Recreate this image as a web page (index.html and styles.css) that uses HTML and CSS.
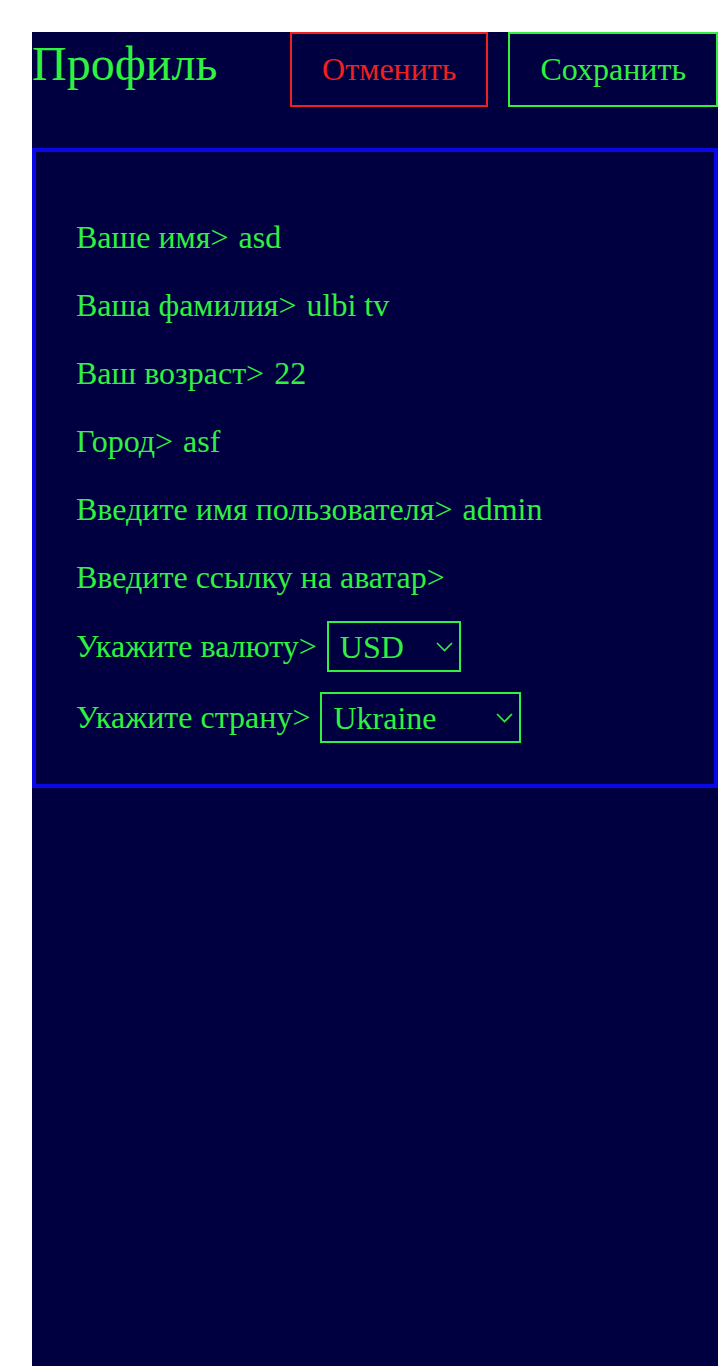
FILE: index.html
```html
<!DOCTYPE html>
<html lang="ru">
<head>
<meta charset="utf-8">
<title>Профиль</title>
<link rel="stylesheet" href="styles.css">
</head>
<body>
<div class="page">
  <div class="header">
    <h1 class="title">Профиль</h1>
    <div class="actions">
      <button class="btn btn-cancel">Отменить</button>
      <button class="btn btn-save">Сохранить</button>
    </div>
  </div>
  <div class="card">
    <div class="row"><span class="label">Ваше имя&gt;</span><input class="value" value="asd" readonly></div>
    <div class="row"><span class="label">Ваша фамилия&gt;</span><input class="value" value="ulbi tv" readonly></div>
    <div class="row"><span class="label">Ваш возраст&gt;</span><input class="value" value="22" readonly></div>
    <div class="row"><span class="label">Город&gt;</span><input class="value" value="asf" readonly></div>
    <div class="row"><span class="label">Введите имя пользователя&gt;</span><input class="value" value="admin" readonly></div>
    <div class="row"><span class="label">Введите ссылку на аватар&gt;</span><input class="value" value="" readonly></div>
    <div class="row row-select">
      <span class="label">Укажите валюту&gt;</span>
      <span class="select-wrap">
        <select class="select select-currency">
          <option>USD</option>
          <option>EUR</option>
          <option>RUB</option>
        </select>
        <svg class="chevron" width="17" height="10" viewBox="0 0 17 10"><polyline points="1,1 8.5,8.5 16,1" fill="none" stroke="currentColor" stroke-width="1.6"/></svg>
      </span>
    </div>
    <div class="row row-select">
      <span class="label">Укажите страну&gt;</span>
      <span class="select-wrap">
        <select class="select select-country">
          <option>Ukraine</option>
          <option>Russia</option>
          <option>Belarus</option>
          <option>Kazakhstan</option>
          <option>Armenia</option>
        </select>
        <svg class="chevron" width="17" height="10" viewBox="0 0 17 10"><polyline points="1,1 8.5,8.5 16,1" fill="none" stroke="currentColor" stroke-width="1.6"/></svg>
      </span>
    </div>
  </div>
</div>
</body>
</html>
```

FILE: styles.css
```css
* {
  box-sizing: border-box;
}

html, body {
  margin: 0;
  padding: 0;
  background: #ffffff;
}

body {
  font-family: "Liberation Serif", "Times New Roman", serif;
}

.page {
  margin: 32px 0 0 32px;
  min-height: calc(100vh - 32px);
  background: #000040;
  color: #30f040;
}

.header {
  display: flex;
  align-items: flex-start;
  margin-bottom: 41px;
}

.title {
  margin: 0;
  padding-top: 4px;
  font-size: 48px;
  line-height: 56px;
  font-weight: normal;
  color: #30f040;
}

.actions {
  margin-left: auto;
  display: flex;
  gap: 20px;
}

.btn {
  font-family: "Liberation Serif", "Times New Roman", serif;
  font-size: 32px;
  line-height: 37px;
  padding: 17px 30px;
  background: transparent;
  border: 2px solid;
  margin: 0;
}

.btn-cancel {
  color: #f02020;
  border-color: #f02020;
}

.btn-save {
  color: #30f040;
  border-color: #30f040;
}

.card {
  border: 4px solid #0808e6;
  padding: 61px 40px 41px;
  display: flex;
  flex-direction: column;
  gap: 20px;
}

.row {
  display: flex;
  align-items: center;
  gap: 10px;
  height: 48px;
  font-size: 32px;
  line-height: 37px;
}

.row-select {
  height: 51px;
}

.label {
  white-space: nowrap;
}

.value {
  flex: 1;
  min-width: 0;
  height: 48px;
  padding: 0;
  border: none;
  outline: none;
  background: transparent;
  color: #30f040;
  font-family: "Liberation Serif", "Times New Roman", serif;
  font-size: 32px;
}

.select-wrap {
  position: relative;
  display: inline-block;
  height: 51px;
}

.select {
  appearance: none;
  -webkit-appearance: none;
  height: 51px;
  padding: 0 0 0 11px;
  border: 2px solid #30f040;
  border-radius: 0;
  background: transparent;
  color: #30f040;
  font-family: "Liberation Serif", "Times New Roman", serif;
  font-size: 32px;
  outline: none;
}

.select option {
  background: #000040;
}

.select-currency {
  width: 134px;
}

.select-country {
  width: 201px;
}

.chevron {
  position: absolute;
  right: 8px;
  top: 21px;
  color: #30f040;
  pointer-events: none;
}
```
